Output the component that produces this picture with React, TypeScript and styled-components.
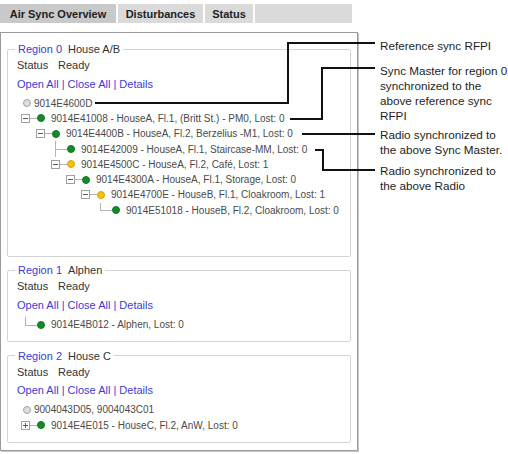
import React from "react";
import styled, { createGlobalStyle } from "styled-components";

type Health = "ok" | "warn";

interface TreeNode {
  level: number;
  text: string;
  health: Health;
  leaf?: boolean;
  closed?: boolean;
  cont?: boolean;
}

interface RegionInfo {
  id: number;
  name: string;
  roots?: string;
  nodes: TreeNode[];
  tall?: boolean;
}

const regions: RegionInfo[] = [
  {
    id: 0,
    name: "House A/B",
    roots: "9014E4600D",
    tall: true,
    nodes: [
      { level: 0, health: "ok", text: "9014E41008 - HouseA, Fl.1, (Britt St.) - PM0, Lost: 0" },
      { level: 1, health: "ok", text: "9014E4400B - HouseA, Fl.2, Berzelius -M1, Lost: 0" },
      { level: 2, health: "ok", leaf: true, cont: true, text: "9014E42009 - HouseA, Fl.1, Staircase-MM, Lost: 0" },
      { level: 2, health: "warn", text: "9014E4500C - HouseA, Fl.2, Café, Lost: 1" },
      { level: 3, health: "ok", text: "9014E4300A - HouseA, Fl.1, Storage, Lost: 0" },
      { level: 4, health: "warn", text: "9014E4700E - HouseB, Fl.1, Cloakroom, Lost: 1" },
      { level: 5, health: "ok", leaf: true, text: "9014E51018 - HouseB, Fl.2, Cloakroom, Lost: 0" },
    ],
  },
  {
    id: 1,
    name: "Alphen",
    nodes: [{ level: 0, health: "ok", leaf: true, text: "9014E4B012 - Alphen, Lost: 0" }],
  },
  {
    id: 2,
    name: "House C",
    roots: "9004043D05, 9004043C01",
    nodes: [{ level: 0, health: "ok", closed: true, text: "9014E4E015 - HouseC, Fl.2, AnW, Lost: 0" }],
  },
];

const notes = [
  { gap: 0, lines: ["Reference sync RFPI"] },
  { gap: 10, lines: ["Sync Master for region 0", "synchronized to the", "above reference sync", "RFPI"] },
  { gap: 4, lines: ["Radio synchronized to", "the above Sync Master."] },
  { gap: 6, lines: ["Radio synchronized to", "the above Radio"] },
];

const GlobalStyle = createGlobalStyle`
  html, body {
    margin: 0;
    padding: 0;
    background: #fff;
  }
  body {
    font-family: "Liberation Sans", Arial, sans-serif;
  }
`;

const Page = styled.div`
  position: relative;
  width: 508px;
  height: 454px;
  display: flex;
  align-items: flex-start;
  gap: 22px;
`;

const Overview = styled.div`
  width: 358px;
  flex: none;
  padding-top: 4px;
`;

const TabBar = styled.div`
  display: flex;
  gap: 2px;
  height: 19px;
`;

const Tab = styled.div<{ $active?: boolean; $width: number }>`
  width: ${(p) => p.$width}px;
  display: flex;
  align-items: center;
  justify-content: center;
  background: ${(p) => (p.$active ? "#c9c9c9" : "#dadada")};
  color: #1e1e1e;
  font-size: 11px;
  font-weight: bold;
`;

const Panel = styled.div`
  box-sizing: border-box;
  width: 358px;
  margin-top: 9px;
  padding: 9px 6px 7px;
  border: 1px solid #9b9b9b;
  box-shadow: 1px 1px 0 #c6c6c6;
`;

const Region = styled.fieldset<{ $tall?: boolean }>`
  margin: 0 0 6.5px;
  padding: 2px 8px ${(p) => (p.$tall ? 38 : 9)}px 9px;
  min-width: 0;
  border: 1px solid #d4d4d4;
  border-radius: 2px;
  &:last-child {
    margin-bottom: 0;
  }
`;

const Legend = styled.legend`
  margin-left: -2px;
  padding: 0 3px;
  font-size: 11px;
  line-height: 14px;
  color: #333;
`;

const RegionLink = styled.span`
  color: #3b3bd6;
`;

const RegionName = styled.span`
  margin-left: 6px;
`;

const StatusLine = styled.div`
  display: flex;
  font-size: 11px;
  line-height: 14px;
  color: #333;
`;

const StatusLabel = styled.span`
  width: 41px;
`;

const Links = styled.div`
  margin-top: 4.5px;
  font-size: 11px;
  line-height: 14px;
  color: #3b3bd6;
  white-space: pre;
`;

const Tree = styled.div`
  margin-top: 5px;
`;

const Row = styled.div<{ $indent: number }>`
  display: flex;
  align-items: center;
  height: 15.3px;
  padding-left: ${(p) => p.$indent}px;
  font-size: 10px;
  color: #4a4a4a;
  white-space: nowrap;
`;

const Ring = styled.span`
  box-sizing: border-box;
  width: 8px;
  height: 8px;
  flex: none;
  border-radius: 50%;
  border: 1px solid #a2a2a2;
  background: #dedede;
  margin-right: 3px;
`;

const Toggle = styled.span<{ $closed?: boolean }>`
  position: relative;
  box-sizing: border-box;
  width: 9px;
  height: 9px;
  flex: none;
  border: 1px solid #a0a0a0;
  background: #fff;
  &::before {
    content: "";
    position: absolute;
    left: 1px;
    right: 1px;
    top: 3px;
    height: 1px;
    background: #5a5a5a;
  }
  &::after {
    content: "";
    display: ${(p) => (p.$closed ? "block" : "none")};
    position: absolute;
    top: 1px;
    bottom: 1px;
    left: 3px;
    width: 1px;
    background: #5a5a5a;
  }
`;

const Dash = styled.span`
  width: 7px;
  flex: none;
  border-top: 1px solid #b4b4b4;
`;

const Elbow = styled.span<{ $cont?: boolean }>`
  position: relative;
  align-self: stretch;
  width: 16px;
  flex: none;
  &::before {
    content: "";
    position: absolute;
    left: 4px;
    top: 0;
    width: 11px;
    height: 50%;
    border-left: 1px solid #b4b4b4;
    border-bottom: 1px solid #b4b4b4;
  }
  &::after {
    content: "";
    display: ${(p) => (p.$cont ? "block" : "none")};
    position: absolute;
    left: 4px;
    top: 50%;
    bottom: 0;
    border-left: 1px solid #b4b4b4;
  }
`;

const Dot = styled.span<{ $health: Health }>`
  box-sizing: border-box;
  width: 8px;
  height: 8px;
  flex: none;
  border-radius: 50%;
  background: ${(p) => (p.$health === "ok" ? "#128a2c" : "#f4c20d")};
  border: 1px solid ${(p) => (p.$health === "ok" ? "#0c7a22" : "#d9a300")};
  margin-right: 6px;
`;

const Notes = styled.div`
  display: flex;
  flex-direction: column;
  padding-top: 37.5px;
  font-size: 11.7px;
  line-height: 15px;
  color: #1e1e1e;
  white-space: nowrap;
`;

const Note = styled.div<{ $gap: number }>`
  margin-top: ${(p) => p.$gap}px;
`;

const Leaders = styled.svg`
  position: absolute;
  left: 0;
  top: 0;
  pointer-events: none;
`;

const NodeRow: React.FC<{ node: TreeNode }> = ({ node }) => (
  <Row $indent={4 + node.level * 15}>
    {node.leaf ? (
      <Elbow $cont={node.cont} />
    ) : (
      <>
        <Toggle $closed={node.closed} />
        <Dash />
      </>
    )}
    <Dot $health={node.health} />
    <span>{node.text}</span>
  </Row>
);

const RegionBox: React.FC<{ region: RegionInfo }> = ({ region }) => (
  <Region $tall={region.tall}>
    <Legend>
      <RegionLink>Region {region.id}</RegionLink>
      <RegionName>{region.name}</RegionName>
    </Legend>
    <StatusLine>
      <StatusLabel>Status</StatusLabel>
      <span>Ready</span>
    </StatusLine>
    <Links>Open All | Close All | Details</Links>
    <Tree>
      {region.roots && (
        <Row $indent={6}>
          <Ring />
          <span>{region.roots}</span>
        </Row>
      )}
      {region.nodes.map((n, i) => (
        <NodeRow key={i} node={n} />
      ))}
    </Tree>
  </Region>
);

export default function App() {
  return (
    <>
      <GlobalStyle />
      <Page>
        <Overview>
          <TabBar>
            <Tab $active $width={116}>Air Sync Overview</Tab>
            <Tab $width={85}>Disturbances</Tab>
            <Tab $width={48}>Status</Tab>
            <Tab $width={97} />
          </TabBar>
          <Panel>
            {regions.map((r) => (
              <RegionBox key={r.id} region={r} />
            ))}
          </Panel>
        </Overview>
        <Notes>
          {notes.map((n, i) => (
            <Note key={i} $gap={n.gap}>
              {n.lines.map((l, j) => (
                <div key={j}>{l}</div>
              ))}
            </Note>
          ))}
        </Notes>
        <Leaders width="508" height="454" viewBox="0 0 508 454">
          <g fill="none" stroke="#111" strokeWidth="2">
            <path d="M95 103 H288 V43 H375" />
            <path d="M290 119 H322 V68 H375" />
            <path d="M302 134 H375" />
            <path d="M315 150 H323 V170 H375" />
          </g>
        </Leaders>
      </Page>
    </>
  );
}
